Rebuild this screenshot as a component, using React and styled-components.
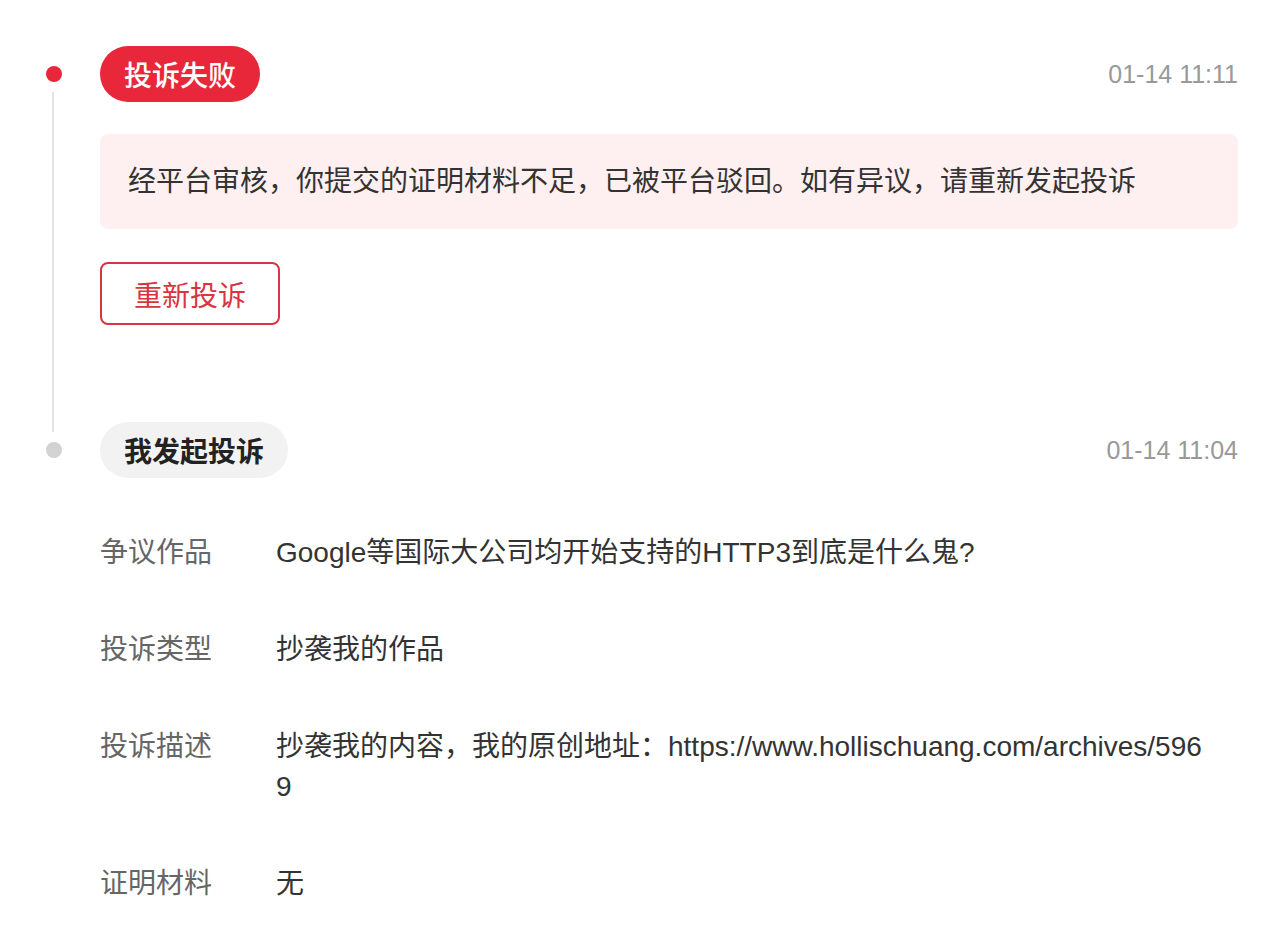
import React from "react";
import styled, { createGlobalStyle } from "styled-components";

const GlobalStyle = createGlobalStyle`
  html, body { margin: 0; padding: 0; background: #ffffff; }
  body {
    font-family: "Liberation Sans", "Noto Sans CJK SC", sans-serif;
    -webkit-font-smoothing: antialiased;
  }
  * { box-sizing: border-box; }
`;

const Page = styled.div`
  padding: 46px 34px 40px 46px;
  display: flex;
  flex-direction: column;
`;

const Item = styled.section`
  display: flex;
`;

const Rail = styled.div`
  width: 54px;
  flex: none;
  display: flex;
  flex-direction: column;
`;

const Dot = styled.span`
  width: 16px;
  height: 16px;
  border-radius: 50%;
  margin-top: 20px;
  background: ${(p) => (p.$active ? "#e8283a" : "#d2d2d2")};
  flex: none;
`;

const Line = styled.span`
  width: 2px;
  margin-left: 6px;
  margin-top: 10px;
  margin-bottom: -10px;
  flex: 1;
  background: #e3e3e3;
`;

const Content = styled.div`
  flex: 1;
  min-width: 0;
  display: flex;
  flex-direction: column;
  padding-bottom: ${(p) => p.$pb || 0}px;
`;

const Header = styled.div`
  display: flex;
  align-items: center;
  justify-content: space-between;
  height: 56px;
`;

const Tag = styled.span`
  height: 56px;
  padding: 0 24px;
  border-radius: 28px;
  display: inline-flex;
  align-items: center;
  font-size: 28px;
  font-weight: ${(p) => (p.$active ? 500 : 700)};
  background: ${(p) => (p.$active ? "#e8283a" : "#f2f2f2")};
  color: ${(p) => (p.$active ? "#ffffff" : "#222222")};
`;

const Time = styled.span`
  font-size: 25px;
  color: #999999;
`;

const Notice = styled.div`
  margin-top: 32px;
  background: #fef0f0;
  border-radius: 8px;
  padding: 28px 28px 27px;
  font-size: 28px;
  line-height: 40px;
  color: #333333;
`;

const OutlineButton = styled.button`
  margin-top: 33px;
  align-self: flex-start;
  height: 63px;
  padding: 0 32px;
  border: 2px solid #d9343f;
  border-radius: 8px;
  background: #ffffff;
  color: #d9343f;
  font-family: inherit;
  font-size: 28px;
  display: inline-flex;
  align-items: center;
  cursor: pointer;
`;

const Details = styled.dl`
  margin: 55px 0 0;
  display: flex;
  flex-direction: column;
  gap: 57px;
`;

const Row = styled.div`
  display: flex;
  font-size: 28px;
  line-height: 40px;
`;

const Label = styled.dt`
  width: 176px;
  flex: none;
  color: #666666;
`;

const Value = styled.dd`
  margin: 0;
  flex: 1;
  min-width: 0;
  padding-right: 28px;
  color: #333333;
  word-break: break-all;
`;

const rows = [
  ["争议作品", "Google等国际大公司均开始支持的HTTP3到底是什么鬼?"],
  ["投诉类型", "抄袭我的作品"],
  ["投诉描述", "抄袭我的内容，我的原创地址：https://www.hollischuang.com/archives/5969"],
  ["证明材料", "无"],
];

export default function App() {
  return (
    <>
      <GlobalStyle />
      <Page>
        <Item>
          <Rail>
            <Dot $active />
            <Line />
          </Rail>
          <Content $pb={97}>
            <Header>
              <Tag $active>投诉失败</Tag>
              <Time>01-14 11:11</Time>
            </Header>
            <Notice>经平台审核，你提交的证明材料不足，已被平台驳回。如有异议，请重新发起投诉</Notice>
            <OutlineButton type="button">重新投诉</OutlineButton>
          </Content>
        </Item>
        <Item>
          <Rail>
            <Dot />
          </Rail>
          <Content>
            <Header>
              <Tag>我发起投诉</Tag>
              <Time>01-14 11:04</Time>
            </Header>
            <Details>
              {rows.map(([k, v]) => (
                <Row key={k}>
                  <Label>{k}</Label>
                  <Value>{v}</Value>
                </Row>
              ))}
            </Details>
          </Content>
        </Item>
      </Page>
    </>
  );
}
